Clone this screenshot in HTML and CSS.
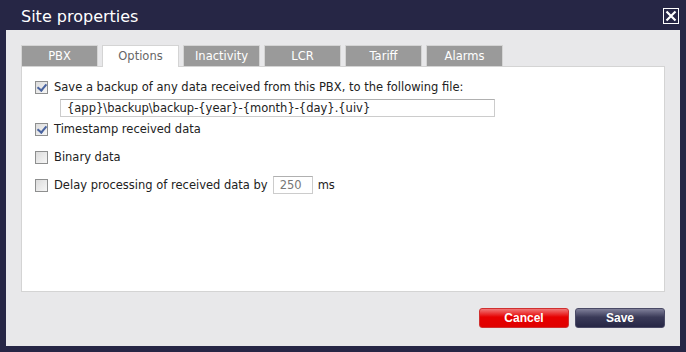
FILE: index.html
```html
<!DOCTYPE html>
<html lang="en">
<head>
    <meta charset="UTF-8">
    <title>Site properties</title>
    <link rel="stylesheet" href="styles.css">
</head>
<body>
    <div id="dialog">
        <div id="title_bar">
            <span id="title">Site properties</span>
            <div id="close_button">
                <svg width="12" height="12" viewBox="0 0 12 12">
                    <path d="M1.5 1.5 L10.5 10.5 M10.5 1.5 L1.5 10.5" stroke="#ffffff" stroke-width="2.2" fill="none"/>
                </svg>
            </div>
        </div>
        <div id="panel">
            <div id="tabs">
                <div class="tab">PBX</div>
                <div class="tab active">Options</div>
                <div class="tab">Inactivity</div>
                <div class="tab">LCR</div>
                <div class="tab">Tariff</div>
                <div class="tab">Alarms</div>
            </div>
            <div id="content">
                <div class="row first">
                    <span class="check checked"></span>
                    <span>Save a backup of any data received from this PBX, to the following file:</span>
                </div>
                <div class="file_row">
                    <div class="text_box wide">{app}\backup\backup-{year}-{month}-{day}.{uiv}</div>
                </div>
                <div class="row">
                    <span class="check checked"></span>
                    <span>Timestamp received data</span>
                </div>
                <div class="row">
                    <span class="check"></span>
                    <span>Binary data</span>
                </div>
                <div class="row">
                    <span class="check"></span>
                    <span>Delay processing of received data by</span>
                    <div class="text_box small">250</div>
                    <span>ms</span>
                </div>
            </div>
            <div id="footer">
                <div class="button cancel">Cancel</div>
                <div class="button save">Save</div>
            </div>
        </div>
    </div>
</body>
</html>
```

FILE: styles.css
```css
* {
    margin: 0px;
    padding: 0px;
    box-sizing: border-box;
}

body {
    background-color: #262645;
    width: 686px;
    height: 352px;
    overflow: hidden;
    font-family: "DejaVu Sans", Verdana, sans-serif;
}

#dialog {
    display: flex;
    flex-direction: column;
    height: 352px;
    padding: 0px 6px 6px 6px;
}

#title_bar {
    height: 30px;
    display: flex;
    align-items: center;
    justify-content: space-between;
    padding-left: 15px;
    padding-right: 1px;
}

#title {
    color: #ffffff;
    font-size: 16px;
    margin-top: 3px;
}

#close_button {
    width: 16px;
    height: 16px;
    border: 1px solid #ffffff;
    display: flex;
    align-items: center;
    justify-content: center;
    margin-bottom: -1px;
}

#panel {
    flex: 1;
    background-color: #e8e8ea;
    padding: 15px 15px 0px 15px;
    display: flex;
    flex-direction: column;
}

#tabs {
    display: flex;
    gap: 4px;
    height: 21px;
}

.tab {
    width: 77px;
    height: 21px;
    background-color: #9a9a9a;
    border: 1px solid #d4d4d4;
    border-bottom: none;
    color: #ffffff;
    font-size: 11.5px;
    text-align: center;
    line-height: 20px;
}

.tab.active {
    background-color: #ffffff;
    color: #666666;
    height: 22px;
    position: relative;
    z-index: 1;
}

#content {
    height: 226px;
    width: 644px;
    background-color: #ffffff;
    border: 1px solid #d4d4d4;
    font-size: 11.5px;
    color: #222222;
    padding-left: 13px;
    padding-top: 10px;
    display: flex;
    flex-direction: column;
    gap: 8px;
}

.row {
    display: flex;
    align-items: center;
    height: 20px;
}

.row.first {
    margin-bottom: -6px;
}

.check {
    width: 13px;
    height: 13px;
    border: 1px solid #8e8f8f;
    background-image: linear-gradient(135deg, #dcdcdc, #f6f6f6);
    margin-right: 6px;
    position: relative;
}

.check.checked::after {
    content: "";
    position: absolute;
    left: 3px;
    top: 0px;
    width: 4px;
    height: 7px;
    border-right: 2px solid #4a64a0;
    border-bottom: 2px solid #4a64a0;
    transform: rotate(40deg);
}

.file_row {
    padding-left: 25px;
    height: 18px;
    margin-bottom: -6px;
}

.text_box {
    border: 1px solid #cccccc;
    border-top-color: #b0b0b0;
    background-color: #ffffff;
    color: #222222;
    height: 18px;
    line-height: 16px;
}

.text_box.wide {
    width: 435px;
    padding-left: 6px;
}

.text_box.small {
    width: 40px;
    color: #777777;
    padding-left: 6px;
    margin-left: 5px;
    margin-right: 5px;
}

#footer {
    display: flex;
    justify-content: flex-end;
    gap: 6px;
    padding-top: 16px;
}

.button {
    width: 90px;
    height: 20px;
    border-radius: 3px;
    color: #ffffff;
    font-family: "Liberation Sans", Arial, sans-serif;
    font-weight: bold;
    font-size: 12px;
    text-align: center;
    line-height: 18px;
}

.cancel {
    background-image: linear-gradient(#f07878, #e60000 45%, #e00000);
    border: 1px solid #d03030;
}

.save {
    background-image: linear-gradient(#80809a, #3a3a58 45%, #262645);
    border: 1px solid #4a4a66;
}
```
